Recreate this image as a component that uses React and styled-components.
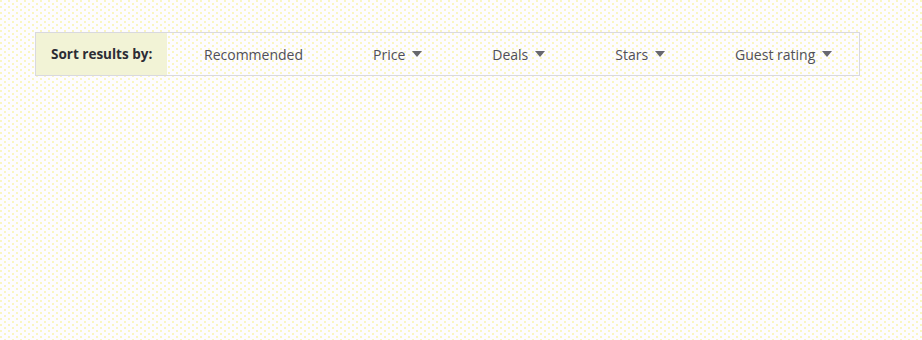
import React from 'react'
import styled, { createGlobalStyle } from 'styled-components'

const GlobalStyle = createGlobalStyle`
  body {
    margin: 0;
    background-color: #fdfcff;
    background-image:
      radial-gradient(circle at 1px 1px, #f8f2a0 0.6px, transparent 0.9px),
      radial-gradient(circle at 5px 4px, #f8f2a0 0.6px, transparent 0.9px);
    background-size: 8px 6px;
    font-family: "Open Sans", "Liberation Sans", sans-serif;
  }
`

const Page = styled.div`
  width: 922px;
  height: 340px;
  padding: 32px 0 0 35px;
  box-sizing: border-box;
`

const SortBar = styled.div`
  width: 825px;
  height: 44px;
  display: flex;
  align-items: stretch;
  border: 1px solid #d9d9df;
  box-sizing: border-box;
`

const Label = styled.div`
  width: 131px;
  flex-shrink: 0;
  display: flex;
  align-items: center;
  padding-left: 15px;
  box-sizing: border-box;
  background: #f2f3d6;
  font-size: 13.5px;
  font-weight: 700;
  color: #2c2c34;
  white-space: nowrap;
`

const Options = styled.div`
  display: flex;
  align-items: center;
  padding-left: 2px;
`

const Option = styled.button`
  display: flex;
  flex-shrink: 0;
  align-items: center;
  gap: 7px;
  padding: 0 35px;
  border: none;
  background: transparent;
  font-family: inherit;
  font-size: 14px;
  color: #4f4f58;
  white-space: nowrap;
  cursor: pointer;
`

const Caret = () => (
  <svg width="10" height="6" viewBox="0 0 10 6">
    <path d="M0 0 L10 0 L5 6 Z" fill="#66666e" />
  </svg>
)

const options = [
  { name: 'Recommended', menu: false },
  { name: 'Price', menu: true },
  { name: 'Deals', menu: true },
  { name: 'Stars', menu: true },
  { name: 'Guest rating', menu: true },
]

const App = () => (
  <Page>
    <GlobalStyle />
    <SortBar>
      <Label>Sort results by:</Label>
      <Options>
        {options.map(o => (
          <Option key={o.name}>
            {o.name}
            {o.menu && <Caret />}
          </Option>
        ))}
      </Options>
    </SortBar>
  </Page>
)

export default App
